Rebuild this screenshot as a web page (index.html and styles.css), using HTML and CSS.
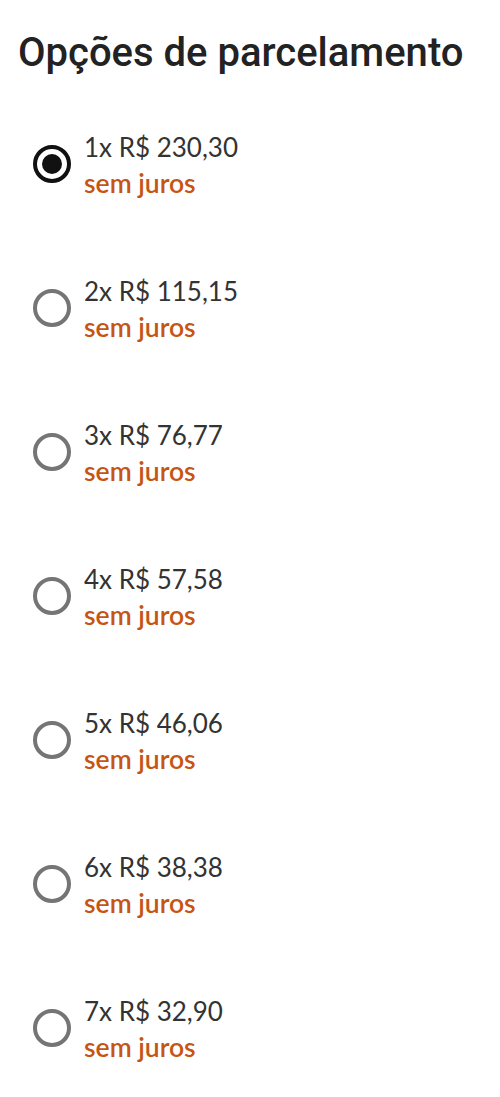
FILE: index.html
```html
<!DOCTYPE html>
<html lang="pt-BR">
<head>
<meta charset="utf-8">
<link rel="stylesheet" href="styles.css">
</head>
<body>
<main class="page">
  <h1 class="title">Opções de parcelamento</h1>
  <ul class="options">
    <li class="option selected"><span class="radio"></span><div class="text"><span class="price">1x R$ 230,30</span><span class="note">sem juros</span></div></li>
    <li class="option"><span class="radio"></span><div class="text"><span class="price">2x R$ 115,15</span><span class="note">sem juros</span></div></li>
    <li class="option"><span class="radio"></span><div class="text"><span class="price">3x R$ 76,77</span><span class="note">sem juros</span></div></li>
    <li class="option"><span class="radio"></span><div class="text"><span class="price">4x R$ 57,58</span><span class="note">sem juros</span></div></li>
    <li class="option"><span class="radio"></span><div class="text"><span class="price">5x R$ 46,06</span><span class="note">sem juros</span></div></li>
    <li class="option"><span class="radio"></span><div class="text"><span class="price">6x R$ 38,38</span><span class="note">sem juros</span></div></li>
    <li class="option"><span class="radio"></span><div class="text"><span class="price">7x R$ 32,90</span><span class="note">sem juros</span></div></li>
  </ul>
</main>
</body>
</html>
```
FILE: styles.css
```css
html, body {
  margin: 0;
  padding: 0;
  background: #ffffff;
}
.page {
  width: 500px;
}
.title {
  margin: 0;
  padding: 27px 0 0 18px;
  height: 65px;
  font-family: Roboto, "Noto Sans", sans-serif;
  font-weight: 500;
  font-size: 40px;
  line-height: 52px;
  color: #222222;
  letter-spacing: 0;
}
.options {
  list-style: none;
  margin: 0;
  padding: 0;
}
.option {
  height: 144px;
  display: flex;
  align-items: center;
  padding-left: 33px;
}
.radio {
  box-sizing: border-box;
  width: 38px;
  height: 38px;
  border: 4px solid #757575;
  border-radius: 50%;
  display: flex;
  align-items: center;
  justify-content: center;
  flex: none;
}
.selected .radio {
  border-color: #111111;
}
.selected .radio::after {
  content: "";
  width: 20px;
  height: 20px;
  border-radius: 50%;
  background: #111111;
}
.text {
  display: flex;
  flex-direction: column;
  margin-left: 13px;
  margin-top: 2px;
  font-family: Lato, "Liberation Sans", sans-serif;
  font-size: 26px;
  line-height: 36px;
}
.price {
  color: #333333;
  font-weight: 400;
}
.note {
  color: #c75512;
  font-weight: 600;
  font-size: 26.5px;
}
```
